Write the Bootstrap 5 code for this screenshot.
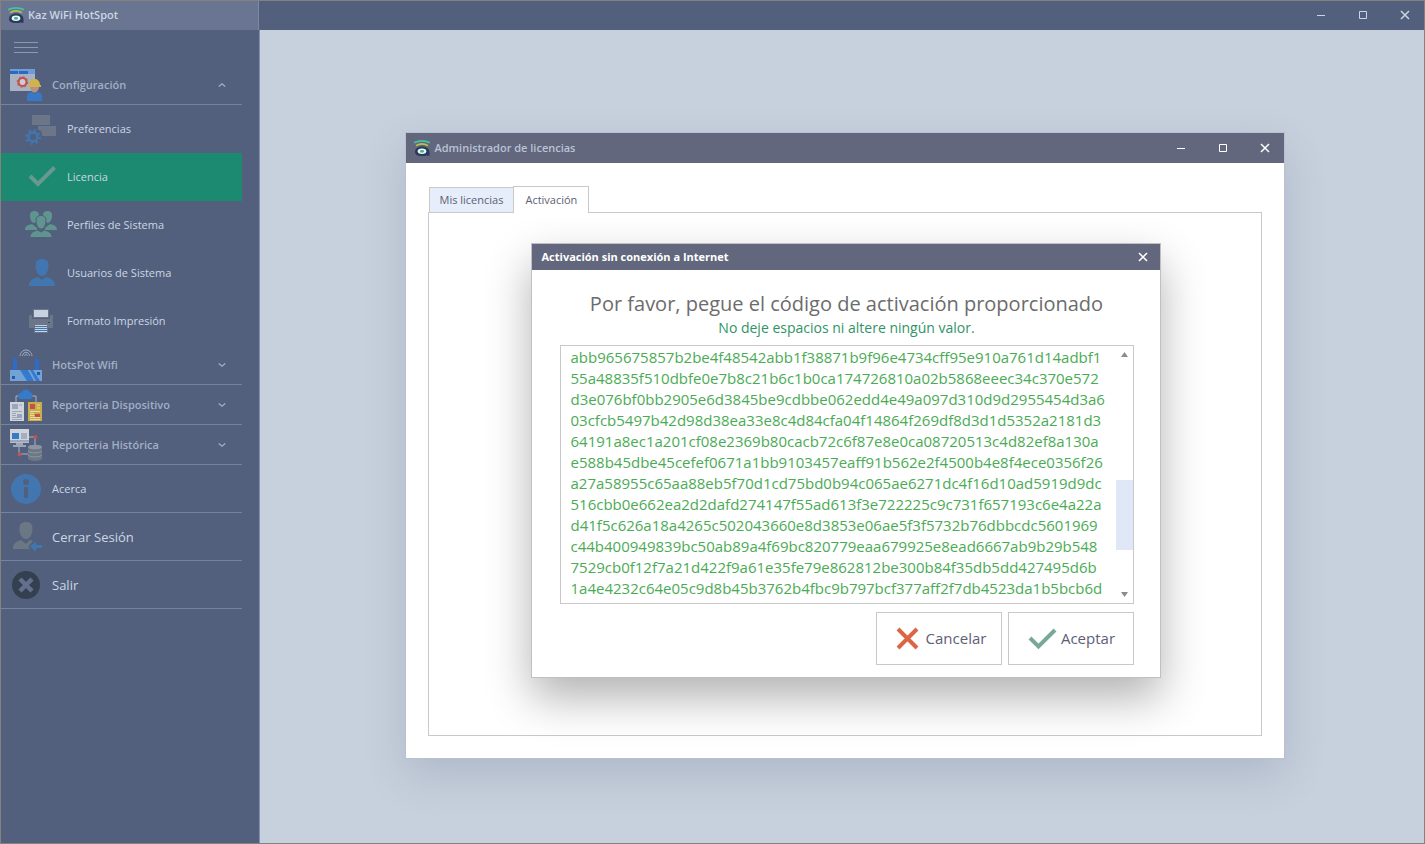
<!DOCTYPE html>
<html lang="es">
<head>
<meta charset="utf-8">
<meta name="viewport" content="width=device-width, initial-scale=1">
<title>Kaz WiFi HotSpot</title>
<link href="https://cdn.jsdelivr.net/npm/bootstrap@5.3.0/dist/css/bootstrap.min.css" rel="stylesheet">
<style>
  body { font-family: "Open Sans", "Noto Sans", sans-serif; font-size: 11px; line-height: 16px; background: #c7d0dd; }
  .app-frame { border: 1px solid #82827e; }
  .app-bar { background: #52607d; height: 29px; }
  .app-brand { width: 258px; background: #697591; color: #ccd6e3; border-right: 1px solid #7d89a5; padding: 0 0 1px 7px; gap: 4px; }
  .side-panel { width: 259px; background: #52607d; border-right: 1px solid #8390ad; }
  .side-panel ul { width: 241px; }
  .menu-toggle { width: 24px; height: 11px; margin: 12px 0 12px 13px; border: solid #8d99b0; border-width: 1px 0; }
  .menu-toggle span { height: 1px; background: #8d99b0; }
  .menu-link { color: #ccd6e3; text-decoration: none; height: 48px; gap: 10px; padding-left: 24px; }
  .menu-link svg, .group-link svg.pic { width: 32px; height: 32px; flex: none; }
  .menu-top { padding-left: 9px; border-bottom: 1px solid #7483a0; }
  .menu-big { font-size: 13px; }
  .menu-link.current { background: #1b8a70; }
  .group-link { color: #a3afc4; font-weight: 600; width: 100%; height: 40px; gap: 10px; padding: 0 16px 0 9px; border: 0; border-bottom: 1px solid #7483a0; background: none; }
  .win-tools { gap: 4px; }
  .win-btn { width: 38px; height: 28px; color: #ccd6e3; }
  .win-btn svg { display: block; margin: auto; }
  .work-area { padding: 103px 0 0 5px; }
  .lic-window { width: 878px; max-width: 100%; box-shadow: 0 0 0 1px #b7c1d0, 0 16px 40px rgba(70, 90, 115, .2); }
  .win-head { background: #62677d; height: 30px; color: #b9c4d6; padding-left: 8px; gap: 5px; }
  .win-head .win-btn, .dlg-head .win-btn { color: #fff; }
  .win-body { padding: 23px 22px 22px; }
  .lic-tabs { padding-left: 1px; }
  .lic-tabs .tab { height: 25px; padding: 0 10px; background: #e6eefb; border: 1px solid #c9c9cb; border-bottom: 0; color: #5c6074; }
  .lic-tabs .tab.active { height: 27px; margin: 0 0 -1px -1px; padding: 0 11px; background: #fff; position: relative; }
  .lic-pane { border: 1px solid #c9c9cb; padding: 30px 0 57px 2px; }
  .dlg { width: 630px; max-width: 100%; border: 1px solid #c0c0c2; box-shadow: 0 20px 42px rgba(0, 0, 0, .3); }
  .dlg-head { background: #62677d; color: #fff; height: 26px; padding-left: 10px; }
  .dlg-head .win-btn { width: 34px; height: 26px; }
  .dlg-body { padding: 20px 26px 12px 28px; }
  .dlg-title { font-size: 20px; line-height: 28px; color: #6c6c6c; }
  .dlg-hint { font-size: 14px; line-height: 20px; color: #2f9465; margin-bottom: 7px; }
  .code-box { border: 1px solid #c9c9cb; height: 259px; margin-bottom: 8px; }
  .code-box textarea { font-size: 15px; line-height: 21px; color: #4bab55; padding: 1px 0 0 10px; border: 0; resize: none; overflow: hidden; white-space: pre; outline: 0; }
  .bar-track { width: 17px; padding: 5px 0; flex: none; }
  .bar-thumb { height: 70px; background: #e0e7f6; margin-top: 122px; }
  .act-row { gap: 6px; }
  .act-btn { width: 126px; height: 53px; border: 1px solid #c9c9cb; border-radius: 0; background: #fff; color: #5c6074; font-size: 15px; gap: 3px; }
  .act-btn svg { width: 32px; height: 32px; }
</style>
</head>
<body>
<svg class="d-none" aria-hidden="true">
  <symbol id="logo" viewBox="0 0 16 16">
    <path d="M0 2.600Q8-.8 16 2.600" fill="none" stroke="#3fc3a4" stroke-width="1.700"/>
    <path d="M2 5.600Q8 2.200 14 5.600" fill="none" stroke="#b9c243" stroke-width="1.600"/>
    <path d="M1 12C1 8.600 4 6.400 8 6.400c5 0 7.500 2.400 7.500 6v3.400h-2l-1-.3c-1 .4-2.200.5-4.500.5-4.500 0-7-1.300-7-4z" fill="#283b5e"/>
    <ellipse cx="8" cy="11.200" rx="4.300" ry="2.700" fill="#f1f7f7"/><ellipse cx="8" cy="11.300" rx="2.200" ry="1.400" fill="#3fb39a"/>
  </symbol>
  <symbol id="i-min" viewBox="0 0 10 10"><path d="M1 5.500h8" stroke="currentColor"/></symbol>
  <symbol id="i-max" viewBox="0 0 10 10"><path d="M1.500 1.500h7v7h-7z" fill="none" stroke="currentColor"/></symbol>
  <symbol id="i-close" viewBox="0 0 10 10"><path d="M1 1l8 8M9 1L1 9" fill="none" stroke="currentColor" stroke-width="1.500"/></symbol>
  <symbol id="i-down" viewBox="0 0 8 8"><path d="M.8 2.500L4 5.300l3.200-2.800" fill="none" stroke="#a3afc4" stroke-width="1.200"/></symbol>
  <symbol id="i-up" viewBox="0 0 8 8"><path d="M.8 5.500L4 2.700l3.200 2.800" fill="none" stroke="#a3afc4" stroke-width="1.200"/></symbol>
</svg>

<div class="app-frame min-vh-100 d-flex flex-column">
  <header class="app-bar d-flex align-items-stretch">
    <div class="app-brand d-flex align-items-center fw-semibold"><svg width="16" height="16"><use href="#logo"/></svg>Kaz WiFi HotSpot</div>
    <div class="win-tools ms-auto d-flex">
      <button class="win-btn btn p-0 border-0" aria-label="Minimizar"><svg width="10" height="10"><use href="#i-min"/></svg></button>
      <button class="win-btn btn p-0 border-0" aria-label="Maximizar"><svg width="10" height="10"><use href="#i-max"/></svg></button>
      <button class="win-btn btn p-0 border-0" aria-label="Cerrar"><svg width="10" height="10"><use href="#i-close"/></svg></button>
    </div>
  </header>

  <div class="d-flex flex-grow-1">
    <nav class="side-panel flex-shrink-0">
      <button class="menu-toggle d-flex align-items-center p-0 bg-transparent" aria-label="Menú"><span class="w-100"></span></button>
      <ul class="list-unstyled m-0">
        <li>
          <button class="group-link d-flex align-items-center">
            <svg class="pic" viewBox="0 0 32 32"><path fill="#a8b2c2" d="M0 0h25v22H0z"/><path fill="#6f9bd8" d="M0 0h25v5H0z"/><path fill="#2b68c0" d="M0 2h8v3H0zM9 2h9v3H9z"/><circle cx="12.500" cy="13" r="4" fill="#c9cdd6" stroke="#c1504e" stroke-width="2.200"/><circle cx="12.500" cy="13" r="5.300" fill="none" stroke="#c1504e" stroke-dasharray="2 2.100"/><path fill="#b98f86" d="M20 17h9c0 4-2 6.500-4.500 6.500S20 21 20 17z"/><path fill="#3878c4" d="M17 32v-5c0-2.500 2-4 5-4l2.500 2 2.500-2c3 0 5 1.500 5 4v5z"/><path fill="#d0b449" d="M18 18v-2h1c0-3.500 2-5.500 4-6h3c2 .5 4 2.500 4 6h1v2z"/></svg>
            Configuración<svg class="ms-auto" width="8" height="8"><use href="#i-up"/></svg>
          </button>
          <ul class="list-unstyled">
            <li><a href="#" class="menu-link d-flex align-items-center"><svg viewBox="0 0 32 32"><path fill="#6b7788" d="M7 2h18v10H7zM13 13h18v10H17v-3l-2-3h-2z"/><circle cx="8" cy="24" r="4.500" fill="none" stroke="#4176b1" stroke-width="2.500"/><circle cx="8" cy="24" r="6.500" fill="none" stroke="#4176b1" stroke-width="3" stroke-dasharray="2.100 3"/></svg>Preferencias</a></li>
            <li><a href="#" class="menu-link current d-flex align-items-center" aria-current="page"><svg viewBox="0 0 32 32"><path d="M5 15l8 8L29.500 6.500" fill="none" stroke="#66998f" stroke-width="4"/></svg>Licencia</a></li>
            <li><a href="#" class="menu-link d-flex align-items-center"><svg viewBox="0 0 32 32" fill="#60958f"><path d="M5 6c0-3 2-4 4.500-4S14 3 14 6l-2.500 3v4L9 14c-3-1-4-4-4-8zM27 6c0-3-2-4-4.500-4S18 3 18 6l2.500 3v4l2.500 1c3-1 4-4 4-8zM0 21c0-4 3-5 7-6l5 4v2zM32 21c0-4-3-5-7-6l-5 4v2zM5.500 28c0-4 3-5.500 7-6.500l3.500 2 3.500-2c4 1 7 2.500 7 6.500z"/><path d="M11 11c0-3 2-4.500 5-4.500s5 1.500 5 4.500c0 5-2 9-5 9s-5-4-5-9z" stroke="#52607d"/></svg>Perfiles de Sistema</a></li>
            <li><a href="#" class="menu-link d-flex align-items-center"><svg viewBox="0 0 32 32"><path fill="#4176b1" d="M10.500 9c0-5 2-7 6.500-7s6.500 2 6.500 7c0 5-3 10-6.500 10s-6.500-5-6.500-10zM4 29c0-5 2-7 9-9l4 3 4-3c7 2 9 4 9 9z"/></svg>Usuarios de Sistema</a></li>
            <li><a href="#" class="menu-link d-flex align-items-center"><svg viewBox="0 0 32 32"><path fill="#6b7788" d="M8 4h16v9H8zM4 10h3v4h18v-4h3v13h-5v5H9v-5H4z"/><path fill="#c7d2e1" d="M9 5h14v7H9z"/><path fill="#39465d" d="M23 17h2v1h-2z"/><path fill="#4176b1" d="M10 20h12v7H10z"/><path d="M10 20.500h12M10 22.500h12M10 24.500h12M10 26.500h12" stroke="#c7d2e1"/></svg>Formato Impresión</a></li>
          </ul>
        </li>
        <li><button class="group-link d-flex align-items-center"><svg class="pic" viewBox="0 0 32 32"><g fill="none" stroke="#a3aec0"><path d="M10 7c1-8 11-8 12 0M12.500 7c.5-5 6.500-5 7 0M14.700 7c.3-2.500 2.300-2.500 2.600 0"/></g><path fill="#2c6dcb" d="M3 11l2-2 2 2v10H3zM25 11l2-2 2 2v10h-4z"/><path fill="#73a2d6" d="M0 21h32v11H0z"/><path fill="#347bd0" d="M10 21h8l6 11h-7zM20 21h3l7 11h-4z"/><path fill="#205cab" d="M2 27h3v3H2zM27 23h3v3h-3z"/></svg>HotsPot Wifi<svg class="ms-auto" width="8" height="8"><use href="#i-down"/></svg></button></li>
        <li><button class="group-link d-flex align-items-center"><svg class="pic" viewBox="0 0 32 32"><path d="M6 13V7h20v6" fill="none" stroke="#a8b2c2"/><path fill="#347bc9" d="M11 10a3 3 0 010-6 5 5 0 019-1 4 4 0 011 7z"/><path fill="#ced3dc" d="M0 13h14v19H0z"/><path fill="#c8ad4a" d="M18 13h14v19H18z"/><path fill="#9ba6b8" d="M2 15h6v5H2zM7 25h5v3H7z"/><path d="M2 22.500h10M2 24.500h4M2 26.500h4M2 28.500h10M2 30.500h10M9 16h3" stroke="#9ba6b8"/><path fill="#c4524b" d="M20 15h5v5h-5zM25 25h5v3h-5z"/><path d="M20 22.500h10M20 24.500h4M20 26.500h4M20 28.500h10M20 30.500h10M27 16h3M27 19h3" stroke="#eadba0"/></svg>Reporteria Dispositivo<svg class="ms-auto" width="8" height="8"><use href="#i-down"/></svg></button></li>
        <li><button class="group-link d-flex align-items-center"><svg class="pic" viewBox="0 0 32 32"><path d="M19 8h6v9M9 17v8h10" fill="none" stroke="#a8b2c2"/><path fill="#ced3dc" d="M0 0h19v14H0z"/><path fill="#9ba6b8" d="M0 11h19v2.500H0zM6 14h7v2h3v2H3v-2h3z"/><path fill="#347bc9" d="M2 4h7v6H2z"/><path d="M11 5h6M11 7h6M11 9h6" stroke="#7d899c"/><circle cx="25.500" cy="8" r="2" fill="#c4524b"/><circle cx="9.500" cy="25.500" r="2" fill="#c4524b"/><path fill="#6d7785" d="M18 18v12c2 2.500 12 2.500 14 0V18z"/><ellipse cx="25" cy="18" rx="7" ry="2.300" fill="#8b95a3"/><path d="M18 22c2 2.500 12 2.500 14 0M18 26c2 2.500 12 2.500 14 0" fill="none" stroke="#9aa3b0" stroke-width=".7"/></svg>Reporteria Histórica<svg class="ms-auto" width="8" height="8"><use href="#i-down"/></svg></button></li>
        <li><a href="#" class="menu-link menu-top d-flex align-items-center"><svg viewBox="0 0 32 32"><circle cx="16" cy="16" r="15" fill="#4176b1"/><circle cx="16" cy="9" r="3" fill="#52607d"/><path fill="#52607d" d="M14 14h4v11h-4z"/></svg>Acerca</a></li>
        <li><a href="#" class="menu-link menu-top menu-big d-flex align-items-center"><svg viewBox="0 0 32 32"><path fill="#6b7785" d="M9.500 8c0-5 2-7 6.500-7s6.500 2 6.500 7c0 6-3 10-6.500 10s-6.500-4-6.500-10zM3 28c0-5 2-7 8-9l5 4 4-4 3 1-5 6 2 2z"/><path fill="#4176b1" d="M20 25.500l6-5V24h6v3h-6v4z"/></svg>Cerrar Sesión</a></li>
        <li><a href="#" class="menu-link menu-top menu-big d-flex align-items-center"><svg viewBox="0 0 32 32"><circle cx="16" cy="16" r="14" fill="#33404f"/><path d="M10 10l12 12M22 10L10 22" stroke="#62708d" stroke-width="4.500"/></svg>Salir</a></li>
      </ul>
    </nav>

    <main class="work-area flex-grow-1 d-flex justify-content-center align-items-start">
      <section class="lic-window bg-white">
        <header class="win-head d-flex align-items-center">
          <svg width="16" height="16"><use href="#logo"/></svg><span class="fw-semibold">Administrador de licencias</span>
          <div class="win-tools ms-auto d-flex">
            <button class="win-btn btn p-0 border-0" aria-label="Minimizar"><svg width="10" height="10"><use href="#i-min"/></svg></button>
            <button class="win-btn btn p-0 border-0" aria-label="Maximizar"><svg width="10" height="10"><use href="#i-max"/></svg></button>
            <button class="win-btn btn p-0 border-0" aria-label="Cerrar"><svg width="10" height="10"><use href="#i-close"/></svg></button>
          </div>
        </header>
        <div class="win-body">
          <div class="lic-tabs d-flex align-items-end" role="tablist">
            <button class="tab" role="tab" aria-selected="false">Mis licencias</button>
            <button class="tab active" role="tab" aria-selected="true">Activación</button>
          </div>
          <div class="lic-pane d-flex justify-content-center" role="tabpanel">
            <div class="dlg bg-white" role="dialog" aria-labelledby="dlgHead">
              <header class="dlg-head d-flex align-items-center">
                <span class="fw-bold" id="dlgHead">Activación sin conexión a Internet</span>
                <button class="win-btn btn p-0 border-0 ms-auto" aria-label="Cerrar"><svg width="10" height="10"><use href="#i-close"/></svg></button>
              </header>
              <div class="dlg-body">
                <label for="code" class="dlg-title d-block text-center">Por favor, pegue el código de activación proporcionado</label>
                <p class="dlg-hint text-center">No deje espacios ni altere ningún valor.</p>
                <div class="code-box d-flex">
                  <textarea id="code" class="flex-grow-1" spellcheck="false">abb965675857b2be4f48542abb1f38871b9f96e4734cff95e910a761d14adbf1
55a48835f510dbfe0e7b8c21b6c1b0ca174726810a02b5868eeec34c370e572
d3e076bf0bb2905e6d3845be9cdbbe062edd4e49a097d310d9d2955454d3a6
03cfcb5497b42d98d38ea33e8c4d84cfa04f14864f269df8d3d1d5352a2181d3
64191a8ec1a201cf08e2369b80cacb72c6f87e8e0ca08720513c4d82ef8a130a
e588b45dbe45cefef0671a1bb9103457eaff91b562e2f4500b4e8f4ece0356f26
a27a58955c65aa88eb5f70d1cd75bd0b94c065ae6271dc4f16d10ad5919d9dc
516cbb0e662ea2d2dafd274147f55ad613f3e722225c9c731f657193c6e4a22a
d41f5c626a18a4265c502043660e8d3853e06ae5f3f5732b76dbbcdc5601969
c44b400949839bc50ab89a4f69bc820779eaa679925e8ead6667ab9b29b548
7529cb0f12f7a21d422f9a61e35fe79e862812be300b84f35db5dd427495d6b
1a4e4232c64e05c9d8b45b3762b4fbc9b797bcf377aff2f7db4523da1b5bcb6d</textarea>
                  <div class="bar-track d-flex flex-column" aria-hidden="true">
                    <svg class="mx-auto flex-shrink-0" width="7" height="7"><path fill="#8b8b93" d="M0 6l3.500-5L7 6z"/></svg>
                    <div class="bar-thumb"></div>
                    <svg class="mx-auto mt-auto flex-shrink-0" width="7" height="7"><path fill="#8b8b93" d="M0 1l3.500 5L7 1z"/></svg>
                  </div>
                </div>
                <div class="d-flex justify-content-end act-row">
                  <button class="act-btn btn d-flex align-items-center justify-content-center p-0"><svg viewBox="0 0 32 32"><path d="M7 6l19 19M26 6L7 25" fill="none" stroke="#dc6643" stroke-width="4"/></svg>Cancelar</button>
                  <button class="act-btn btn d-flex align-items-center justify-content-center p-0"><svg viewBox="0 0 32 32"><path d="M4 15l8.500 8.500L29 7" fill="none" stroke="#77a898" stroke-width="4"/></svg>Aceptar</button>
                </div>
              </div>
            </div>
          </div>
        </div>
      </section>
    </main>
  </div>
</div>
<script src="https://cdn.jsdelivr.net/npm/bootstrap@5.3.0/dist/js/bootstrap.bundle.min.js"></script>
</body>
</html>
